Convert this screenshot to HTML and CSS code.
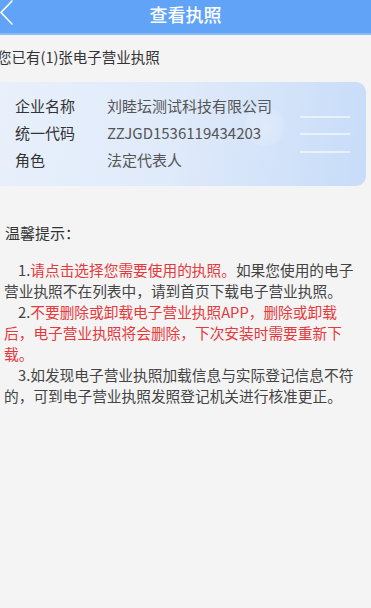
FILE: index.html
```html
<!DOCTYPE html>
<html lang="zh">
<head>
<meta charset="utf-8">
<link rel="stylesheet" href="styles.css">
</head>
<body>
<header class="topbar">
  <span class="back">
    <svg width="14" height="26" viewBox="0 0 14 26"><polyline points="12,1 1,12.5 12,24" fill="none" stroke="#fff" stroke-width="1.6" stroke-linejoin="round" stroke-linecap="round"/></svg>
  </span>
  <h1 class="title">查看执照</h1>
  <span class="spacer"></span>
</header>
<p class="count">您已有(1)张电子营业执照</p>
<section class="card">
  <div class="deco">
    <span class="ring"></span>
    <span class="line"></span>
    <span class="line"></span>
    <span class="line"></span>
  </div>
  <div class="row"><span class="label">企业名称</span><span class="value">刘睦坛测试科技有限公司</span></div>
  <div class="row"><span class="label">统一代码</span><span class="value">ZZJGD1536119434203</span></div>
  <div class="row"><span class="label">角色</span><span class="value">法定代表人</span></div>
</section>
<h2 class="tips-title">温馨提示：</h2>
<div class="tips">
  <p>1.<span class="red">请点击选择您需要使用的执照。</span>如果您使用的电子营业执照不在列表中，请到首页下载电子营业执照。</p>
  <p>2.<span class="red">不要删除或卸载电子营业执照APP，删除或卸载后，电子营业执照将会删除，下次安装时需要重新下载。</span></p>
  <p>3.如发现电子营业执照加载信息与实际登记信息不符的，可到电子营业执照发照登记机关进行核准更正。</p>
</div>
</body>
</html>
```
FILE: styles.css
```css
html, body {
  margin: 0;
  padding: 0;
}
body {
  width: 371px;
  min-height: 608px;
  background: #f4f4f4;
  font-family: "Noto Sans CJK SC", "Noto Sans", sans-serif;
  color: #333;
  overflow: hidden;
}
.topbar {
  height: 33px;
  background: #61a3f6;
  border-bottom: 2px solid #8bbcf7;
  display: grid;
  grid-template-columns: 40px 1fr 40px;
  align-items: center;
}
.back {
  display: flex;
  align-items: center;
  height: 33px;
  margin-top: -7px;
}
.title {
  margin: 0;
  text-align: center;
  color: #fff;
  font-size: 18px;
  font-weight: 500;
  line-height: 24px;
  margin-top: -6px;
}
.count {
  margin: 12px 0 0 -3px;
  font-size: 14.5px;
  line-height: 20px;
  color: #333;
}
.card {
  position: relative;
  margin: 15px 0 0 -10px;
  width: 376px;
  height: 104px;
  box-sizing: border-box;
  padding: 10px 0 0 25px;
  border-radius: 10px;
  background: linear-gradient(100deg, #e9f0fb 0%, #dfeafa 50%, #c7dcf9 100%);
  overflow: hidden;
}
.deco {
  position: absolute;
  left: 255px;
  top: 22px;
  width: 110px;
  height: 60px;
}
.ring {
  position: absolute;
  left: 0;
  top: 2px;
  width: 40px;
  height: 40px;
  border-radius: 50%;
  background: radial-gradient(circle, rgba(255,255,255,0.25), rgba(255,255,255,0.05));
}
.line {
  position: absolute;
  left: 55px;
  width: 50px;
  height: 2px;
  background: rgba(255,255,255,0.55);
}
.line:nth-child(2) { top: 12px; }
.line:nth-child(3) { top: 29px; }
.line:nth-child(4) { top: 47px; }
.row {
  position: relative;
  display: flex;
  line-height: 27px;
  font-size: 15px;
}
.label {
  width: 92px;
  color: #333;
}
.value {
  color: #555;
}
.tips-title {
  margin: 37px 0 0 5px;
  font-size: 15px;
  font-weight: normal;
  line-height: 20px;
  color: #333;
}
.tips {
  margin: 16px 0 0 4px;
  width: 350px;
  font-size: 14.7px;
  line-height: 21px;
  color: #444;
}
.tips p {
  margin: 0;
  text-indent: 14px;
}
.red {
  color: #e5393c;
}
```
